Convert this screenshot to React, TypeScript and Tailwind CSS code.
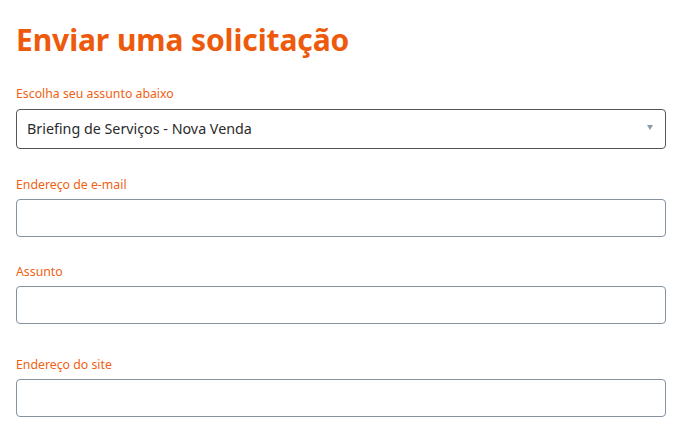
import React from "react";

const fields = [
    { id: "email", label: "Endereço de e-mail", type: "email", gap: "mt-[27px]" },
    { id: "assunto", label: "Assunto", type: "text", gap: "mt-[26px]" },
    { id: "site", label: "Endereço do site", type: "text", gap: "mt-[32px]" },
];

const App = () => {
    return (
        <div className="bg-white min-h-screen px-4 pt-[20px] font-['Noto_Sans',sans-serif]">
            <h1 className="text-[30px] leading-[40px] font-bold text-[#ee5a0c] tracking-[-0.1px]">
                Enviar uma solicitação
            </h1>
            <form className="mt-[25px]">
                <div>
                    <label
                        htmlFor="subject"
                        className="block text-[12.3px] leading-[18px] text-[#f05f13]"
                    >
                        Escolha seu assunto abaixo
                    </label>
                    <div className="relative mt-[6px] w-[650px]">
                        <select
                            id="subject"
                            className="appearance-none w-full h-[40px] border border-[#555555] rounded-[4px] pl-[10px] pr-8 text-[14.3px] text-[#2b2b2b] bg-white"
                            defaultValue="briefing"
                        >
                            <option value="briefing">Briefing de Serviços - Nova Venda</option>
                        </select>
                        <span className="pointer-events-none absolute right-[13px] top-[16px] w-0 h-0 border-l-[3px] border-r-[3px] border-t-[5px] border-l-transparent border-r-transparent border-t-[#8a9aa8]" />
                    </div>
                </div>
                {fields.map((f) => (
                    <div key={f.id} className={f.gap}>
                        <label
                            htmlFor={f.id}
                            className="block text-[12.3px] leading-[18px] text-[#f05f13]"
                        >
                            {f.label}
                        </label>
                        <input
                            id={f.id}
                            type={f.type}
                            className="mt-[5px] block w-[650px] h-[38px] border border-[#8592a0] rounded-[4px] px-[10px] text-[14.3px]"
                        />
                    </div>
                ))}
            </form>
        </div>
    );
};

export default App;
